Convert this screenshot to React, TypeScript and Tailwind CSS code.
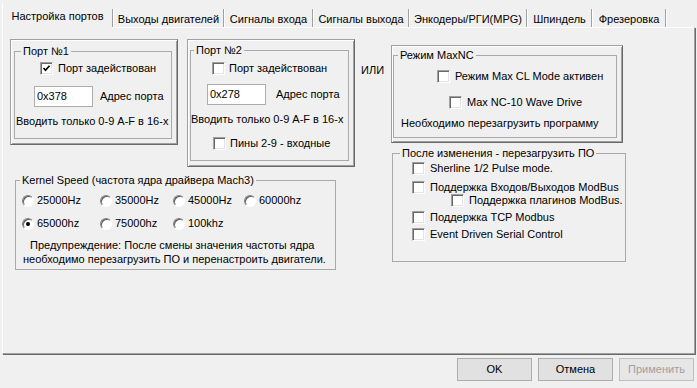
import React from "react";

function Check({ checked = false }: { checked?: boolean }) {
  return (
    <span className="relative inline-block w-[13px] h-[13px] shrink-0 bg-white border border-t-[#a0a0a0] border-l-[#a0a0a0] border-r-white border-b-white shadow-[inset_1px_1px_0_#696969,inset_-1px_-1px_0_#e3e3e3]">
      {checked && (
        <svg className="absolute left-[1px] top-[1px]" width="9" height="9" viewBox="0 0 9 9">
          <polyline points="1.5,4 3.5,6.2 7.5,1.8" fill="none" stroke="#000" strokeWidth="1.7" />
        </svg>
      )}
    </span>
  );
}

function Radio({ checked = false }: { checked?: boolean }) {
  return (
    <span className="inline-flex items-center justify-center w-[12px] h-[12px] shrink-0 rounded-full bg-white border border-t-[#808080] border-l-[#808080] border-r-[#ffffff] border-b-[#ffffff] shadow-[inset_1px_1px_0_#5a5a5a]">
      {checked && <span className="w-[4px] h-[4px] rounded-full bg-black" />}
    </span>
  );
}

function RadioItem({ label, checked = false, w }: { label: string; checked?: boolean; w: string }) {
  return (
    <div className={`${w} flex items-center gap-[3px]`}>
      <Radio checked={checked} />
      <span>{label}</span>
    </div>
  );
}

const frame =
  "border border-t-[#a0a0a0] border-l-[#a0a0a0] border-r-[#696969] border-b-[#696969] shadow-[inset_1px_1px_0_#ffffff,inset_-1px_-1px_0_#a0a0a0]";

export default function App() {
  return (
    <div className="w-[697px] h-[388px] bg-[#f0f0f0] text-[11px] leading-[13px] text-black font-['Liberation_Sans',Arial,sans-serif] overflow-hidden">
      {/* Tabs */}
      <div className="relative z-10 flex items-end h-[27px] pl-[2px]">
        <div className="h-[25px] mb-[-1px] w-[110px] bg-[#f0f0f0] border-l border-white flex justify-center pt-[7px]">
          Настройка портов
        </div>
        <span className="self-end mb-[0px] h-[18px] w-[1px] bg-[#a0a0a0]" />
        <span className="self-end h-[18px] w-[1px] bg-white" />
        <div className="h-[18px] w-[109px] flex justify-center pt-[4px]">Выходы двигателей</div>
        <span className="h-[18px] w-[1px] bg-[#a0a0a0]" />
        <span className="h-[18px] w-[1px] bg-white" />
        <div className="h-[18px] w-[87px] flex justify-center pt-[4px]">Сигналы входа</div>
        <span className="h-[18px] w-[1px] bg-[#a0a0a0]" />
        <span className="h-[18px] w-[1px] bg-white" />
        <div className="h-[18px] w-[94px] flex justify-center pt-[4px]">Сигналы выхода</div>
        <span className="h-[18px] w-[1px] bg-[#a0a0a0]" />
        <span className="h-[18px] w-[1px] bg-white" />
        <div className="h-[18px] w-[116px] flex justify-center pt-[4px]">Энкодеры/РГИ(MPG)</div>
        <span className="h-[18px] w-[1px] bg-[#a0a0a0]" />
        <span className="h-[18px] w-[1px] bg-white" />
        <div className="h-[18px] w-[63px] flex justify-center pt-[4px]">Шпиндель</div>
        <span className="h-[18px] w-[1px] bg-[#a0a0a0]" />
        <span className="h-[18px] w-[1px] bg-white" />
        <div className="h-[18px] w-[72px] flex justify-center pt-[4px]">Фрезеровка</div>
        <span className="h-[18px] w-[1px] bg-[#a0a0a0]" />
        <span className="h-[18px] w-[1px] bg-white" />
      </div>

      {/* Tab page */}
      <div className="ml-[2px] w-[693px] h-[327px] border-t border-l border-t-white border-l-white border-r border-b border-r-[#a0a0a0] border-b-[#a0a0a0] shadow-[1px_1px_0_#696969] flex items-start pt-[11px] pl-[7px]">
        {/* Left column */}
        <div className="w-[381px] shrink-0 flex flex-col">
          <div className="flex items-start">
            {/* Port 1 */}
            <div className={`w-[168px] h-[106px] ${frame} pt-[5px] pl-[3px]`}>
              <fieldset className="w-[158px] h-[94px] border border-[#a9a9a9]">
                <legend className="ml-[6px] px-[2px] leading-[13px]">Порт №1</legend>
                <div className="mt-[4px] ml-[25px] flex items-center gap-[5px]">
                  <Check checked />
                  <span>Порт задействован</span>
                </div>
                <div className="mt-[11px] ml-[19px] flex items-center">
                  <div className="w-[59px] h-[21px] bg-white border border-[#abadb3] pl-[2px] flex items-center">0x378</div>
                  <span className="ml-[7px]">Адрес порта</span>
                </div>
                <div className="mt-[8px] ml-[1px] whitespace-nowrap">Вводить только 0-9 A-F в 16-х</div>
              </fieldset>
            </div>

            {/* Port 2 */}
            <div className={`ml-[9px] w-[168px] h-[128px] ${frame} pt-[4px] pl-[2px]`}>
              <fieldset className="w-[159px] h-[117px] border border-[#a9a9a9]">
                <legend className="ml-[3px] px-[2px] leading-[13px]">Порт №2</legend>
                <div className="mt-[5px] ml-[21px] flex items-center gap-[4px]">
                  <Check />
                  <span>Порт задействован</span>
                </div>
                <div className="mt-[9px] ml-[16px] flex items-center">
                  <div className="w-[59px] h-[21px] bg-white border border-[#abadb3] pl-[2px] flex items-center">0x278</div>
                  <span className="ml-[10px]">Адрес порта</span>
                </div>
                <div className="mt-[8px] whitespace-nowrap">Вводить только 0-9 A-F в 16-х</div>
                <div className="mt-[11px] ml-[22px] flex items-center gap-[4px]">
                  <Check />
                  <span>Пины 2-9 - входные</span>
                </div>
              </fieldset>
            </div>

            <div className="ml-[6px] mt-[25px]">ИЛИ</div>
          </div>

          {/* Kernel speed */}
          <fieldset className="ml-[5px] mt-[7px] w-[321px] h-[96px] border border-[#a9a9a9]">
            <legend className="ml-[4px] px-[2px] leading-[13px]">Kernel Speed (частота ядра драйвера Mach3)</legend>
            <div className="mt-[7px] ml-[6px] flex items-center">
              <RadioItem w="w-[78px]" label="25000Hz" />
              <RadioItem w="w-[73px]" label="35000Hz" />
              <RadioItem w="w-[71px]" label="45000Hz" />
              <RadioItem w="w-[70px]" label="60000hz" />
            </div>
            <div className="mt-[10px] ml-[6px] flex items-center">
              <RadioItem w="w-[78px]" label="65000hz" checked />
              <RadioItem w="w-[73px]" label="75000hz" />
              <RadioItem w="w-[71px]" label="100khz" />
            </div>
            <div className="mt-[8px] leading-[14px] whitespace-nowrap">
              <div className="ml-[14px]">Предупреждение: После смены значения частоты ядра</div>
              <div className="ml-[7px]">необходимо перезагрузить ПО и перенастроить двигатели.</div>
            </div>
          </fieldset>
        </div>

        {/* Right column */}
        <div className="mt-[6px] flex flex-col">
          <div className={`w-[232px] h-[98px] ${frame} pt-[3px] pl-[1px]`}>
            <fieldset className="w-[224px] h-[89px] border border-[#a9a9a9]">
              <legend className="ml-[4px] px-[2px] leading-[13px]">Режим MaxNC</legend>
              <div className="mt-[8px] ml-[43px] flex items-center gap-[5px]">
                <Check />
                <span>Режим Max CL Mode активен</span>
              </div>
              <div className="mt-[13px] ml-[55px] flex items-center gap-[5px]">
                <Check />
                <span>Max NC-10 Wave Drive</span>
              </div>
              <div className="mt-[8px] ml-[7px] whitespace-nowrap">Необходимо перезагрузить программу</div>
            </fieldset>
          </div>

          <fieldset className="ml-[1px] mt-[4px] w-[234px] h-[115px] border border-[#a9a9a9]">
            <legend className="ml-[7px] px-[2px] leading-[13px]">После изменения - перезагрузить ПО</legend>
            <div className="mt-[2px] ml-[19px] flex items-center gap-[5px]">
              <Check />
              <span>Sherline 1/2 Pulse mode.</span>
            </div>
            <div className="mt-[6px] ml-[19px] flex items-center gap-[5px]">
              <Check />
              <span>Поддержка Входов/Выходов ModBus</span>
            </div>
            <div className="ml-[58px] flex items-center gap-[5px]">
              <Check />
              <span className="whitespace-nowrap">Поддержка плагинов ModBus.</span>
            </div>
            <div className="mt-[4px] ml-[19px] flex items-center gap-[5px]">
              <Check />
              <span>Поддержка TCP Modbus</span>
            </div>
            <div className="mt-[4px] ml-[19px] flex items-center gap-[5px]">
              <Check />
              <span>Event Driven Serial Control</span>
            </div>
          </fieldset>
        </div>
      </div>

      {/* Buttons */}
      <div className="mt-[4px] flex justify-end gap-[6px] pr-[3px]">
        <button className="w-[75px] h-[23px] bg-[#e1e1e1] border border-[#adadad] text-black">OK</button>
        <button className="w-[75px] h-[23px] bg-[#e1e1e1] border border-[#adadad] text-black">Отмена</button>
        <button className="w-[75px] h-[23px] bg-[#e6e6e6] border border-[#bfbfbf] text-[#a0a0a0]">Применить</button>
      </div>
    </div>
  );
}
